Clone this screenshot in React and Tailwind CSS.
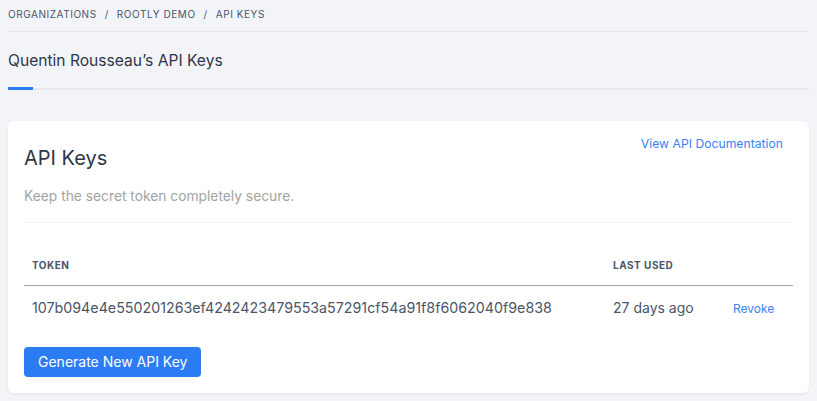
export default function App() {
  const token = "107b094e4e550201263ef4242423479553a57291cf54a91f8f6062040f9e838";

  return (
    <div className="min-h-screen bg-[#f3f4f8] px-2 font-['Inter',sans-serif]">
      {/* breadcrumb */}
      <nav className="h-[32px] border-b border-[#e3e5ea] pt-[8px] text-[10px] leading-[12px] tracking-[0.055em] text-[#4a5568] uppercase">
        <span>Organizations</span>
        <span className="mx-[8px]">/</span>
        <span>Rootly Demo</span>
        <span className="mx-[8px]">/</span>
        <span>API Keys</span>
      </nav>

      <h1 className="pt-[17px] text-[15.6px] leading-6 text-[#2d3748]">
        Quentin Rousseau’s API Keys
      </h1>

      <div className="mt-[14px] border-b-2 border-[#e6e8ed]">
        <div className="w-[25px] h-[3px] bg-[#2b7cf2] -mb-[2px]"></div>
      </div>

      <div className="mt-[31px] bg-white rounded-md shadow-[0_1px_3px_rgba(0,0,0,0.06)] px-4 pt-[15px] pb-4">
        <div className="flex justify-between items-start">
          <h2 className="mt-[8px] text-[20px] leading-7 text-[#2d3748]">API Keys</h2>
          <a href="#" className="mr-[10px] text-[12.2px] leading-4 text-[#3b82f6]">
            View API Documentation
          </a>
        </div>
        <p className="mt-[14px] pb-4 border-b border-[#edf0f3] text-[13.8px] leading-5 text-[#a3a3a3]">
          Keep the secret token completely secure.
        </p>

        <div className="mt-[32px] flex border-b border-[#a0a4ab] pb-[10px] text-[10px] leading-[20px] font-bold tracking-[0.05em] text-[#4a5568] uppercase">
          <div className="flex-1 px-2">Token</div>
          <div className="w-[120px] px-2">Last Used</div>
          <div className="w-[68px]"></div>
        </div>
        <div className="flex pt-[12px] text-[14px] leading-5 text-[#4a5568]">
          <div className="flex-1 px-2 text-[14.25px]">{token}</div>
          <div className="w-[120px] px-2">27 days ago</div>
          <div className="w-[68px] pl-2">
            <a href="#" className="text-[12px] text-[#3b82f6]">Revoke</a>
          </div>
        </div>

        <button className="mt-[28px] h-[30px] px-[14px] rounded bg-[#2b7cf2] text-white text-[14px] leading-5">
          Generate New API Key
        </button>
      </div>
    </div>
  );
}
